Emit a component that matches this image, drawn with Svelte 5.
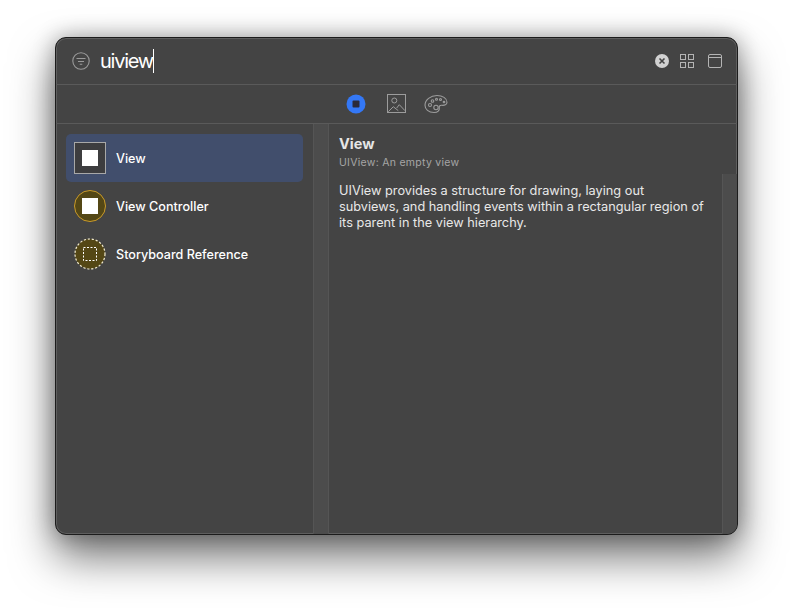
<script>
  let items = [
    { name: 'View', kind: 'view', selected: true },
    { name: 'View Controller', kind: 'controller' },
    { name: 'Storyboard Reference', kind: 'reference' }
  ];
</script>

<div class="page">
  <div class="window">
    <header class="search-bar">
      <svg class="filter" width="20" height="20" viewBox="0 0 20 20" fill="none" stroke="#9a9a9a">
        <circle cx="10" cy="10" r="8.2" stroke-width="1.1" />
        <path d="M5.5 7.5h9M7 10.5h6M8.7 13.2h2.6" stroke-width="1.1" />
      </svg>
      <div class="query">uiview<span class="caret"></span></div>
      <svg class="clear" width="14" height="14" viewBox="0 0 14 14">
        <circle cx="7" cy="7" r="7" fill="#d2d2d2" />
        <path d="M4.5 4.5l5 5M9.5 4.5l-5 5" stroke="#444" stroke-width="1.6" />
      </svg>
      <svg class="grid" width="14" height="14" viewBox="0 0 14 14" fill="none" stroke="#b4b4b4">
        <rect x="0.5" y="0.5" width="5" height="5" />
        <rect x="8.5" y="0.5" width="5" height="5" />
        <rect x="0.5" y="8.5" width="5" height="5" />
        <rect x="8.5" y="8.5" width="5" height="5" />
      </svg>
      <svg class="panel" width="14" height="14" viewBox="0 0 14 14" fill="none" stroke="#b4b4b4">
        <rect x="0.5" y="0.5" width="13" height="13" rx="1.5" />
        <path d="M0.5 3.5h13" />
      </svg>
    </header>

    <nav class="tabs">
      <svg class="stop" width="20" height="20" viewBox="0 0 20 20">
        <circle cx="10" cy="10" r="9.5" fill="#3478f6" />
        <rect x="6.5" y="6.5" width="7" height="7" rx="1" fill="#2a2a3a" />
      </svg>
      <svg width="20" height="20" viewBox="0 0 20 20" fill="none" stroke="#9c9c9c">
        <rect x="0.5" y="0.5" width="18" height="18" />
        <circle cx="7.3" cy="6.500" r="2.500" />
        <path d="M1.300 17.700l5-5 5 4M9.700 14l2.600-3.300 5.700 6" />
      </svg>
      <svg class="palette" width="24" height="20" viewBox="0 0 24 20" fill="none" stroke="#9c9c9c" stroke-width="1.1">
        <path d="M13 1.500c5.500 0 10 2.800 10 6.800 0 2.600-2.600 3.200-5 3-2-.2-3 .6-2.700 2.200.4 2.700-1.300 5-5.300 5C4.500 18.500 1 15.300 1 11.200 1 5.800 6.500 1.500 13 1.500z" />
        <circle cx="6" cy="11" r="1.500" />
        <circle cx="8.500" cy="7" r="1.300" />
        <circle cx="12.500" cy="5.200" r="1" />
        <circle cx="16.500" cy="5.500" r="1" />
        <circle cx="20" cy="8" r="0.800" />
        <circle cx="12" cy="13.500" r="2.200" />
      </svg>
    </nav>

    <div class="panes">
      <aside class="list">
        {#each items as item}
          <div class="row" class:selected={item.selected}>
            {#if item.kind === 'reference'}
              <svg class="ref-icon" width="32" height="32" viewBox="0 0 32 32" fill="#544715" stroke="#f3ecd0">
                <circle cx="16" cy="16" r="15" stroke-width="1.2" stroke-dasharray="2.200 1.800" />
                <rect x="9.500" y="9.500" width="13" height="13" fill="none" stroke="#fff" stroke-dasharray="2 1.500" />
              </svg>
            {:else}
              <span class="icon {item.kind}"><span class="glyph"></span></span>
            {/if}
            <span class="name">{item.name}</span>
          </div>
        {/each}
      </aside>
      <div class="scroller"></div>
      <main class="detail">
        <div class="detail-head">
          <h1>View</h1>
          <p class="sub">UIView: An empty view</p>
        </div>
        <div class="detail-body">
          <p class="desc">UIView provides a structure for drawing, laying out<br />subviews, and handling events within a rectangular region of<br />its parent in the view hierarchy.</p>
          <div class="scroller right"></div>
        </div>
      </main>
    </div>
  </div>
</div>

<style>
  :global(body) {
    background: #fff;
  }

  .page {
    padding: 37px 55px 73px;
    font-family: Inter, "Liberation Sans", sans-serif;
  }

  .window {
    box-sizing: border-box;
    width: 683px;
    height: 498px;
    display: flex;
    flex-direction: column;
    background: #444444;
    border: 1px solid #1c1c1c;
    border-radius: 11px;
    box-shadow: inset 0 0 0 1px #5e5e5e, 0 22px 44px rgba(0, 0, 0, 0.55), 0 0 22px rgba(0, 0, 0, 0.32);
    overflow: hidden;
  }

  .search-bar {
    height: 46px;
    flex: none;
    display: flex;
    align-items: center;
    padding: 0 15px;
    border-bottom: 1px solid #5a5a5a;
  }

  .filter {
    margin-right: 9px;
  }

  .query {
    flex: 1;
    display: flex;
    align-items: center;
    color: #fff;
    font-size: 20px;
    letter-spacing: -1.25px;
    line-height: 24px;
  }

  .caret {
    width: 1px;
    height: 24px;
    background: #fff;
  }

  .clear {
    margin-right: 11px;
  }

  .grid {
    margin-right: 14px;
  }

  .tabs {
    height: 38px;
    flex: none;
    display: flex;
    align-items: center;
    justify-content: center;
    gap: 20px;
    padding-left: 1px;
    border-bottom: 1px solid #5a5a5a;
  }

  .stop {
    margin-right: 1px;
  }

  .palette {
    margin-left: -3px;
  }

  .panes {
    flex: 1;
    min-height: 0;
    display: flex;
  }

  .list {
    box-sizing: border-box;
    width: 257px;
    flex: none;
    padding: 10px 10px 0;
  }

  .row {
    height: 48px;
    display: flex;
    align-items: center;
    gap: 10px;
    padding-left: 8px;
    border-radius: 5px;
    color: #fff;
    font-size: 12.600px;
    font-weight: 500;
  }

  .row.selected {
    background: #414e6c;
  }

  .icon {
    box-sizing: border-box;
    width: 32px;
    height: 32px;
    flex: none;
    display: flex;
    align-items: center;
    justify-content: center;
  }

  .ref-icon {
    flex: none;
  }

  .icon .glyph {
    width: 16px;
    height: 16px;
    background: #fff;
  }

  .icon.view {
    background: #3d3d3f;
    border: 1px solid #a8a8a8;
  }

  .icon.controller {
    background: #544715;
    border: 1.500px solid #c99a2a;
    border-radius: 50%;
  }

  .scroller {
    box-sizing: border-box;
    width: 16px;
    flex: none;
    background: #4c4c4c;
    border-left: 1px solid #555555;
    border-right: 1px solid #555555;
  }

  .detail {
    flex: 1;
    min-width: 0;
    display: flex;
    flex-direction: column;
  }

  .detail-head {
    height: 50px;
    flex: none;
    padding: 0 10px;
  }

  h1 {
    margin: 10px 0 0;
    color: #e6e6e6;
    font-size: 14.500px;
    font-weight: 700;
    line-height: 19px;
  }

  .sub {
    margin: 3px 0 0;
    color: #a6a6a6;
    font-size: 10.500px;
    letter-spacing: 0.28px;
    line-height: 13px;
  }

  .detail-body {
    flex: 1;
    display: flex;
  }

  .desc {
    flex: 1;
    margin: 0;
    padding: 9px 0 0 10px;
    color: #e8e8e8;
    font-size: 12.750px;
    line-height: 16px;
    white-space: nowrap;
  }

  .scroller.right {
    width: 15px;
    border-right: 0;
  }
</style>
